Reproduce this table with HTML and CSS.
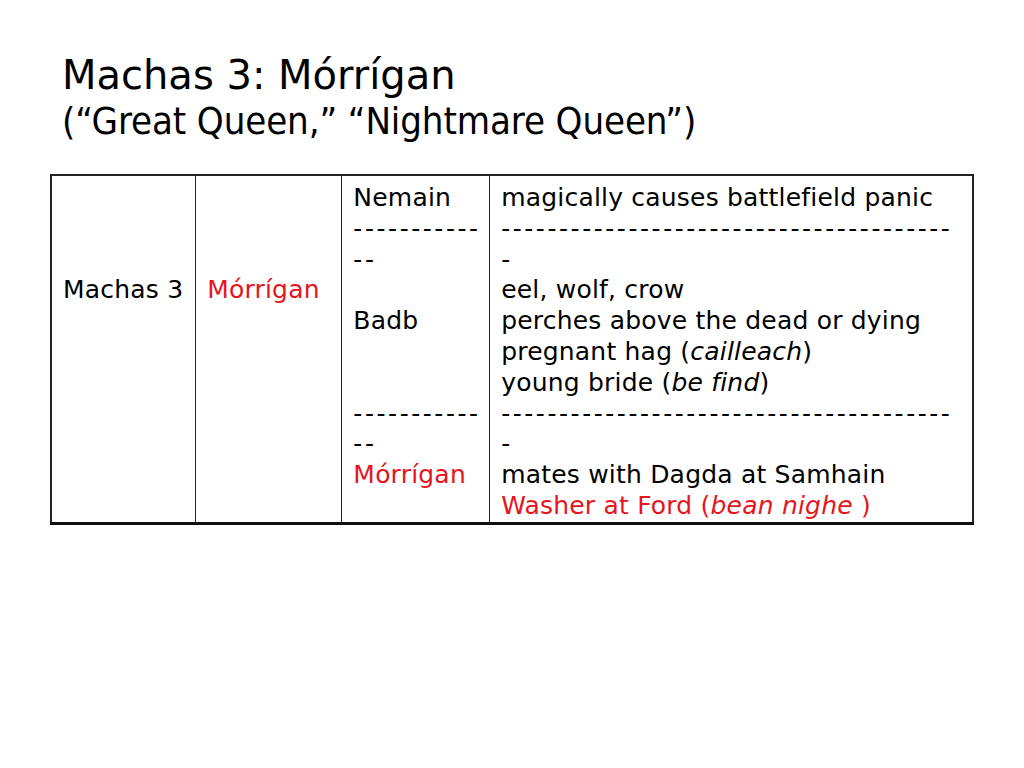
FILE: index.html
```html
<!DOCTYPE html>
<html>
<head>
<meta charset="utf-8">
<link rel="stylesheet" href="styles.css">
</head>
<body>
<div class="slide">
  <h1 class="title"><span class="t1">Machas 3: Mórrígan</span><br><span class="t2">(“Great Queen,” “Nightmare Queen”)</span></h1>
  <table class="grid">
    <colgroup>
      <col class="c1"><col class="c2"><col class="c3"><col class="c4">
    </colgroup>
    <tr>
      <td class="low">Machas 3</td>
      <td class="low red">Mórrígan</td>
      <td class="top">Nemain<br><span class="dash">-----------</span><br><span class="dash">--</span><br><br>Badb<br><br><br><span class="dash">-----------</span><br><span class="dash">--</span><br><span class="red">Mórrígan</span></td>
      <td class="top">magically causes battlefield panic<br><span class="dash">---------------------------------------</span><br><span class="dash">-</span><br>eel, wolf, crow<br>perches above the dead or dying<br>pregnant hag (<i>cailleach</i>)<br>young bride (<i>be find</i>)<br><span class="dash">---------------------------------------</span><br><span class="dash">-</span><br>mates with Dagda at Samhain<br><span class="red">Washer at Ford (<i>bean nighe</i> )</span></td>
    </tr>
  </table>
</div>
</body>
</html>
```
FILE: styles.css
```css
html, body {
  margin: 0;
  padding: 0;
  background: #fff;
}
.slide {
  width: 1024px;
  height: 768px;
  font-family: "DejaVu Sans", Verdana, sans-serif;
  color: #000;
  padding-top: 53px;
  box-sizing: border-box;
}
.title {
  margin: 0 0 30px 62px;
  font-weight: normal;
  font-size: 40px;
  line-height: 45px;
}
.t2 {
  font-family: "DejaVu Sans Condensed", "DejaVu Sans", sans-serif;
  font-stretch: condensed;
  font-size: 38px;
  letter-spacing: -0.1px;
}
.grid {
  margin-left: 50px;
  width: 924px;
  border-collapse: collapse;
  font-size: 25px;
  letter-spacing: 0.2px;
  line-height: 30.8px;
  border-top: 2px solid #222;
  border-left: 2px solid #222;
  border-right: 2px solid #222;
  border-bottom: 3px solid #111;
}
.c1 { width: 145px; }
.c2 { width: 147px; }
.c3 { width: 148px; }
.c4 { width: 484px; }
.grid td {
  border-left: 1.5px solid #222;
  border-right: 1.5px solid #222;
  padding: 7px 4px 0 11px;
  vertical-align: top;
  white-space: nowrap;
}
.low {
  padding-top: 99.4px !important;
}
.dash {
  letter-spacing: 2.55px;
}
.red { color: #e8141c; }
```
